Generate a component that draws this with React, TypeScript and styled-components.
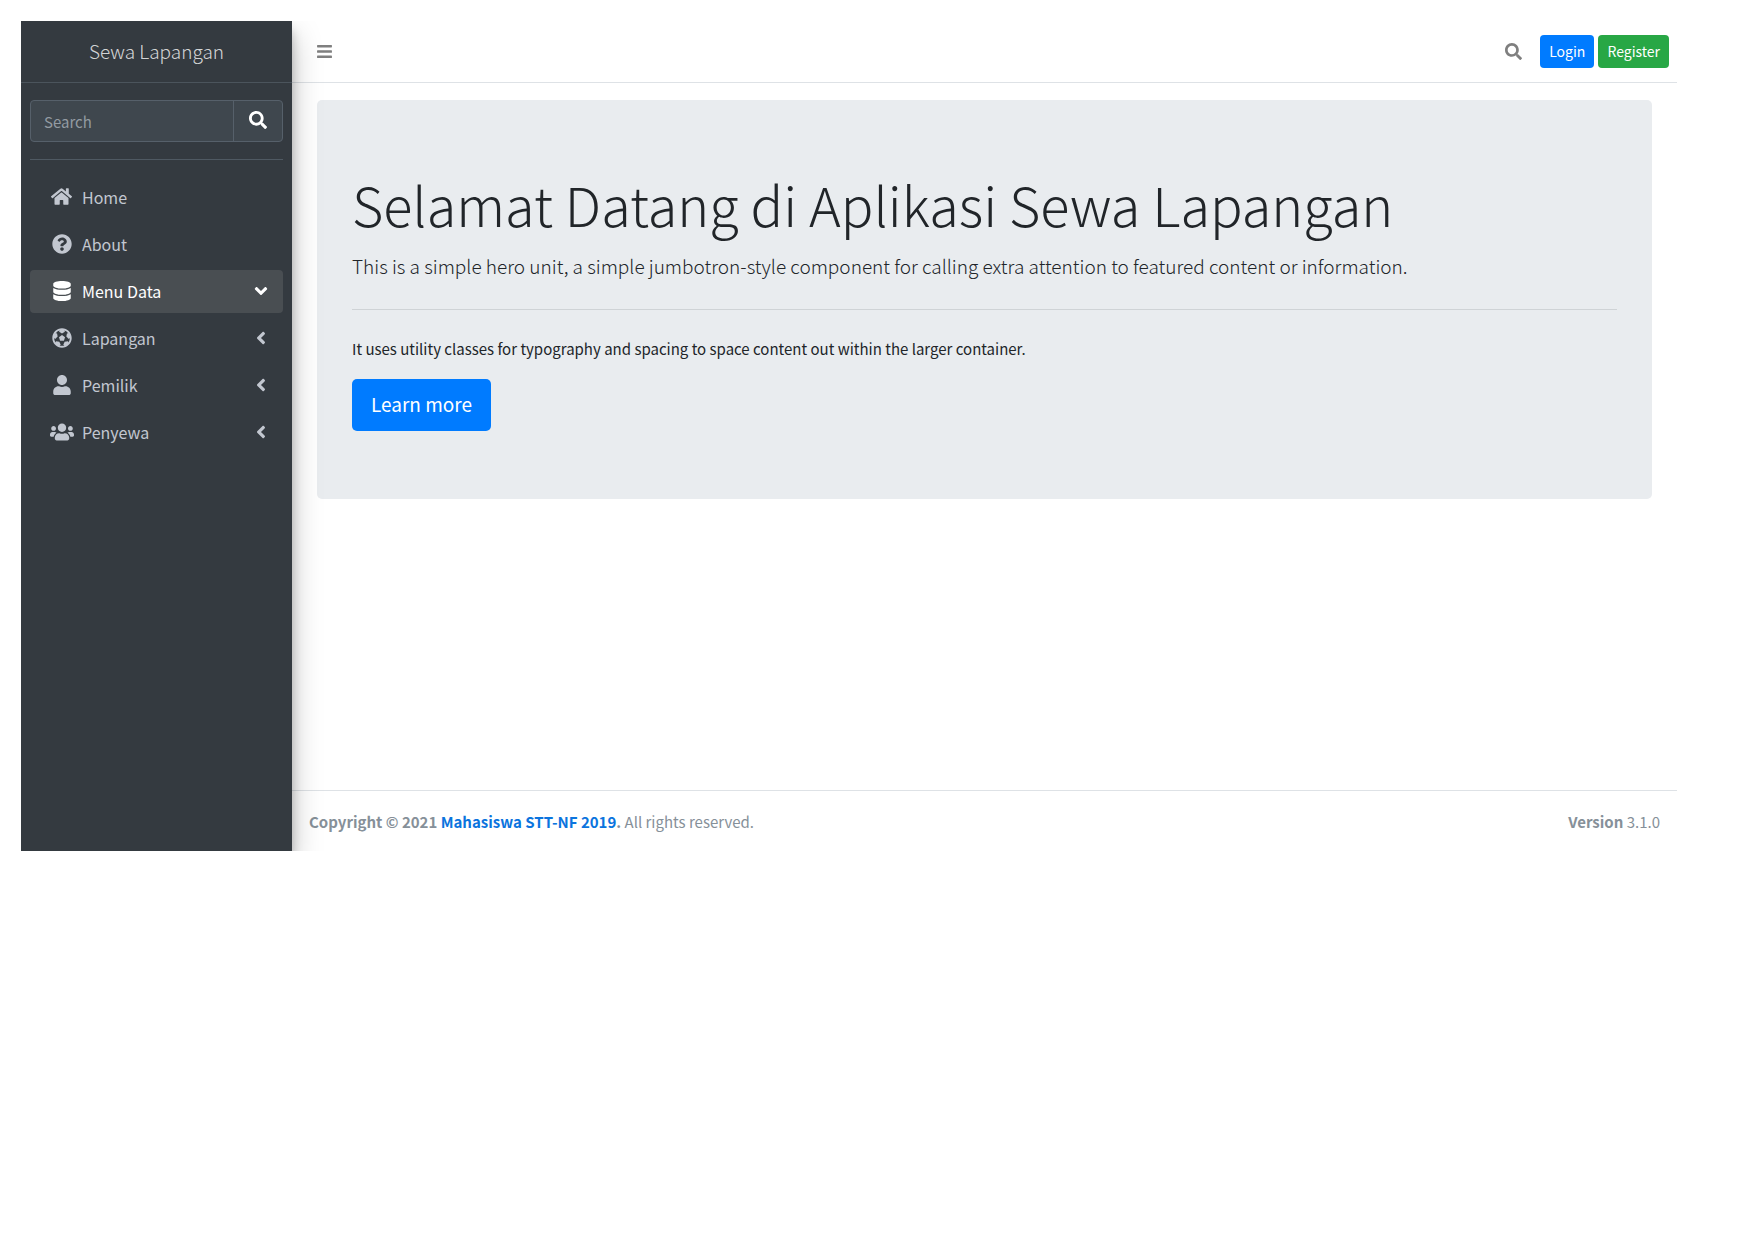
import React from 'react';
import styled, { createGlobalStyle } from 'styled-components';
import {
  FaAngleDown,
  FaAngleLeft,
  FaBars,
  FaDatabase,
  FaFutbol,
  FaHome,
  FaQuestionCircle,
  FaSearch,
  FaUser,
  FaUsers,
} from 'react-icons/fa';

const GlobalStyle = createGlobalStyle`
  *, *::before, *::after { box-sizing: border-box; }
  body {
    margin: 0;
    background: #fff;
    color: #212529;
    font-family: 'Noto Sans CJK SC', 'Noto Sans', sans-serif;
    font-size: 15px;
    line-height: 24px;
  }
  button, input { font: inherit; }
  a { text-decoration: none; }
`;

const Page = styled.div`
  padding: 21px 77px 21px 21px;
`;

const Shell = styled.div`
  display: grid;
  grid-template-columns: 271px minmax(0, 1fr);
  min-height: 830px;
  overflow: hidden;
`;

const Sidebar = styled.aside`
  z-index: 1;
  background: #343a40;
  box-shadow: 0 14px 28px rgba(0, 0, 0, 0.25), 0 10px 10px rgba(0, 0, 0, 0.22);
`;

const Brand = styled.a`
  display: flex;
  align-items: center;
  justify-content: center;
  height: 62px;
  padding-bottom: 2px;
  border-bottom: 1px solid #4b545c;
  color: rgba(255, 255, 255, 0.8);
  font-size: 19px;
  font-weight: 300;
`;

const SidebarBody = styled.div`
  padding: 17px 9px;
`;

const SearchForm = styled.form`
  display: flex;
  height: 42px;
  border: 1px solid #56606a;
  border-radius: 4px;
  background: #3f474e;
  overflow: hidden;
`;

const SearchInput = styled.input`
  flex: 1;
  min-width: 0;
  padding: 2px 13px 0;
  border: 0;
  background: transparent;
  color: #fff;
  outline: none;

  &::placeholder {
    color: #939ba2;
    opacity: 1;
  }
`;

const SearchSubmit = styled.button`
  display: grid;
  place-items: center;
  width: 49px;
  padding: 0 0 2px;
  border: 0;
  border-left: 1px solid #56606a;
  background: transparent;
  color: #fff;
  font-size: 18px;
`;

const MenuList = styled.ul`
  display: flex;
  flex-direction: column;
  gap: 4px;
  margin: 17px 0 0;
  padding: 16px 0 0;
  border-top: 1px solid #4f5962;
  list-style: none;
`;

const MenuLink = styled.a<{ $active?: boolean }>`
  display: grid;
  grid-template-columns: 29px 1fr 20px;
  align-items: center;
  column-gap: 6px;
  height: 43px;
  padding: 0 12px 2px 17px;
  border-radius: 4px;
  background: ${(p) => (p.$active ? '#494e52' : 'transparent')};
  color: ${(p) => (p.$active ? '#fff' : '#c2c7d0')};
  font-size: 16px;
`;

const MenuIcon = styled.span<{ $size?: number }>`
  display: grid;
  place-items: center;
  font-size: ${(p) => p.$size ?? 20}px;
`;

const Main = styled.div`
  display: flex;
  flex-direction: column;
  min-width: 0;
`;

const Navbar = styled.header`
  display: flex;
  align-items: center;
  justify-content: space-between;
  height: 62px;
  padding: 0 8px 0 24px;
  border-bottom: 1px solid #dee2e6;
`;

const IconButton = styled.button`
  display: grid;
  place-items: center;
  padding: 0;
  border: 0;
  background: transparent;
  color: #7f7f7f;
  font-size: 17px;
`;

const NavActions = styled.div`
  display: flex;
  align-items: center;
  gap: 4px;

  ${IconButton} { margin-right: 14px; }
`;

const Button = styled.a<{ $tone: string; $large?: boolean }>`
  display: inline-flex;
  align-items: center;
  height: ${(p) => (p.$large ? 52 : 33)}px;
  padding: 0 ${(p) => (p.$large ? 19 : 9)}px 2px;
  border-radius: ${(p) => (p.$large ? 5 : 4)}px;
  background: ${(p) => p.$tone};
  color: #fff;
  font-size: ${(p) => (p.$large ? 19 : 14)}px;
`;

const Content = styled.main`
  flex: 1;
  padding: 17px 25px;
`;

const Jumbotron = styled.section`
  padding: 69px 35px 68px;
  border-radius: 5px;
  background: #e9ecef;
`;

const Title = styled.h1`
  margin: 0 0 11px;
  font-size: 54px;
  font-weight: 300;
  line-height: 70px;
`;

const Lead = styled.p`
  margin: 0;
  font-size: 19px;
  font-weight: 300;
  line-height: 32px;
`;

const Rule = styled.hr`
  margin: 27px 0;
  border: 0;
  border-top: 1px solid #cfd3d6;
`;

const Copy = styled.p`
  margin: 0 0 18px;
`;

const Footer = styled.footer`
  display: flex;
  justify-content: space-between;
  padding: 19px 17px 17px;
  border-top: 1px solid #dee2e6;
  color: #869099;

  a { color: #0b74de; }
`;

const menu = [
  { label: 'Home', icon: <FaHome />, size: 21 },
  { label: 'About', icon: <FaQuestionCircle /> },
  { label: 'Menu Data', icon: <FaDatabase />, active: true, arrow: <FaAngleDown /> },
  { label: 'Lapangan', icon: <FaFutbol />, arrow: <FaAngleLeft /> },
  { label: 'Pemilik', icon: <FaUser />, arrow: <FaAngleLeft /> },
  { label: 'Penyewa', icon: <FaUsers />, size: 24, arrow: <FaAngleLeft /> },
];

export default function App() {
  return (
    <Page>
      <GlobalStyle />
      <Shell>
        <Sidebar>
          <Brand href="#">Sewa Lapangan</Brand>
          <SidebarBody>
            <SearchForm role="search" onSubmit={(e) => e.preventDefault()}>
              <SearchInput type="search" placeholder="Search" aria-label="Search" />
              <SearchSubmit aria-label="Submit search">
                <FaSearch />
              </SearchSubmit>
            </SearchForm>
            <nav>
              <MenuList>
                {menu.map((item) => (
                  <li key={item.label}>
                    <MenuLink href="#" $active={item.active}>
                      <MenuIcon $size={item.size}>{item.icon}</MenuIcon>
                      <span>{item.label}</span>
                      {item.arrow && <MenuIcon>{item.arrow}</MenuIcon>}
                    </MenuLink>
                  </li>
                ))}
              </MenuList>
            </nav>
          </SidebarBody>
        </Sidebar>
        <Main>
          <Navbar>
            <IconButton aria-label="Toggle menu">
              <FaBars />
            </IconButton>
            <NavActions>
              <IconButton aria-label="Open search">
                <FaSearch />
              </IconButton>
              <Button href="#" $tone="#007bff">Login</Button>
              <Button href="#" $tone="#28a745">Register</Button>
            </NavActions>
          </Navbar>
          <Content>
            <Jumbotron>
              <Title>Selamat Datang di Aplikasi Sewa Lapangan</Title>
              <Lead>
                This is a simple hero unit, a simple jumbotron-style component for calling extra
                attention to featured content or information.
              </Lead>
              <Rule />
              <Copy>
                It uses utility classes for typography and spacing to space content out within the
                larger container.
              </Copy>
              <Button href="#" $tone="#007bff" $large>Learn more</Button>
            </Jumbotron>
          </Content>
          <Footer>
            <span>
              <strong>
                Copyright © 2021 <a href="#">Mahasiswa STT-NF 2019</a>.
              </strong>{' '}
              All rights reserved.
            </span>
            <span>
              <strong>Version</strong> 3.1.0
            </span>
          </Footer>
        </Main>
      </Shell>
    </Page>
  );
}
